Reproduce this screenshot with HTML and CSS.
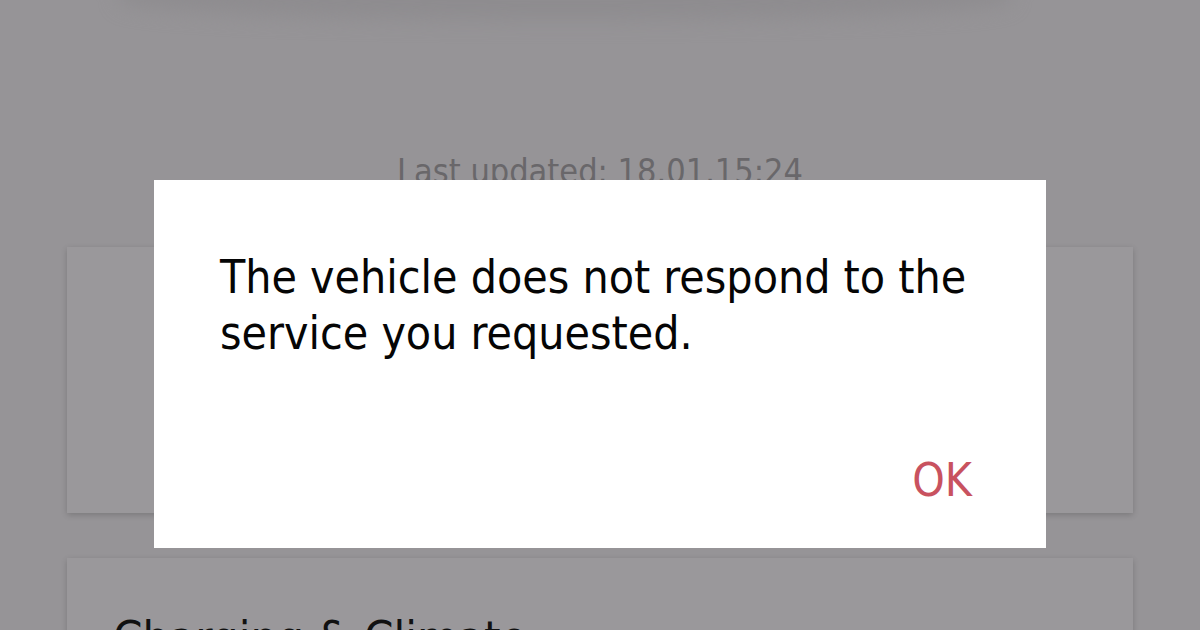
FILE: index.html
```html
<!DOCTYPE html>
<html lang="en">
<head>
<meta charset="utf-8">
<title>Vehicle status</title>
<link rel="stylesheet" href="styles.css">
</head>
<body>
<div class="screen">
  <div class="top-blur"></div>
  <div class="updated">Last updated: 18.01.15:24</div>
  <div class="cards">
    <section class="card card-status"></section>
    <section class="card card-climate">
      <h2 class="card-title">Charging &amp; Climate</h2>
    </section>
  </div>

  <div class="dialog" role="alertdialog">
    <p class="dialog-msg">The vehicle does not respond to the service you requested.</p>
    <div class="dialog-actions">
      <button class="dialog-btn">OK</button>
    </div>
  </div>
</div>
</body>
</html>
```

FILE: styles.css
```css
html, body {
  margin: 0;
  padding: 0;
  width: 1200px;
  height: 630px;
  overflow: hidden;
  background: #969497;
}
.screen {
  position: relative;
  width: 1200px;
  height: 630px;
  overflow: hidden;
  font-family: "DejaVu Sans Condensed", "DejaVu Sans", sans-serif;
  font-stretch: condensed;
}
.top-blur {
  height: 40px;
  margin: -20px 190px 0 120px;
  background: #8e8c8f;
  border-radius: 0 0 50% 50%;
  filter: blur(10px);
}
.updated {
  margin-top: 131px;
  text-align: center;
  font-size: 34px;
  line-height: 40px;
  color: #69676a;
}
.cards {
  display: flex;
  flex-direction: column;
  gap: 45px;
  padding: 0 67px;
  margin-top: 56px;
}
.card {
  background: #9a989b;
  box-shadow: 0 2px 6px rgba(0,0,0,0.18);
}
.card-status {
  height: 266px;
}
.card-climate {
  height: 200px;
  padding: 52px 46px 0;
}
.card-title {
  margin: 0;
  font-weight: normal;
  font-size: 47px;
  line-height: 56px;
  color: #111;
}
.dialog {
  position: absolute;
  left: 154px;
  top: 180px;
  width: 892px;
  height: 368px;
  box-sizing: border-box;
  background: #ffffff;
  padding: 69px 74px 0 66px;
  display: flex;
  flex-direction: column;
}
.dialog-msg {
  margin: 0;
  font-size: 46px;
  line-height: 56px;
  color: #050505;
}
.dialog-actions {
  display: flex;
  justify-content: flex-end;
  margin-top: 91px;
}
.dialog-btn {
  border: 0;
  background: none;
  padding: 0;
  font-family: inherit;
  font-stretch: condensed;
  font-size: 46px;
  line-height: 56px;
  color: #c8525f;
}
```
